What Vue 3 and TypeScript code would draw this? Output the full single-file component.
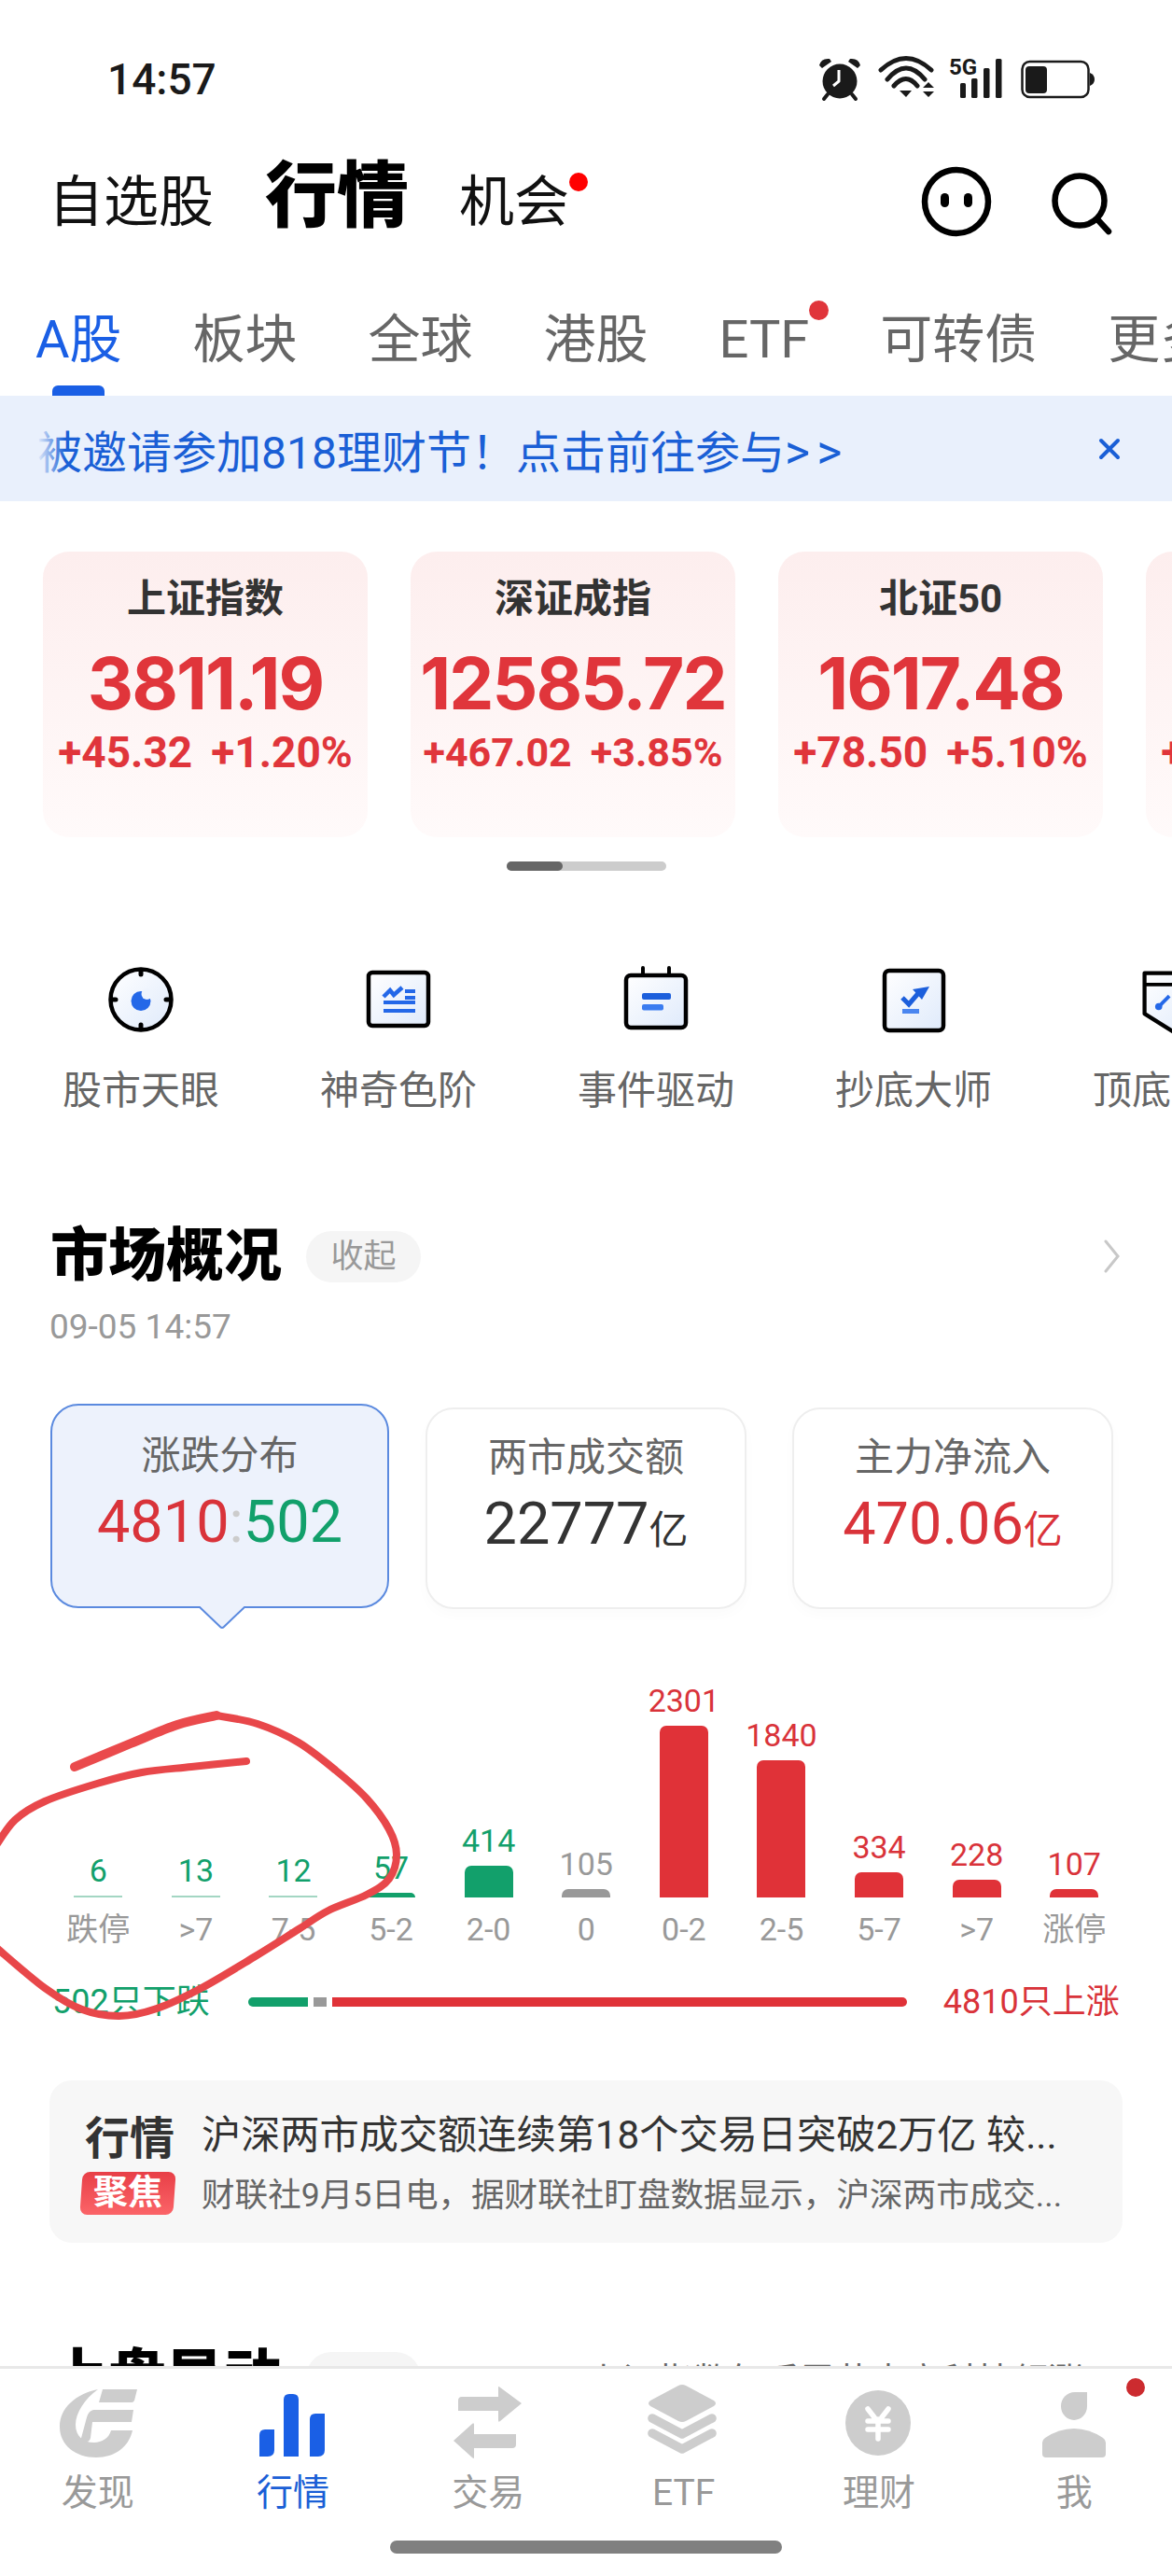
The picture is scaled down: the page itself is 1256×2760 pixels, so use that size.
<script setup lang="ts">
type Pt = [number, number]

function smooth(p: Pt[]): string {
  let d = `M${p[0][0]} ${p[0][1]}`
  for (let i = 0; i < p.length - 1; i++) {
    const a = p[Math.max(i - 1, 0)]
    const b = p[i]
    const c = p[i + 1]
    const e = p[Math.min(i + 2, p.length - 1)]
    d += ` C${b[0] + (c[0] - a[0]) / 6} ${b[1] + (c[1] - a[1]) / 6} ${c[0] - (e[0] - b[0]) / 6} ${c[1] - (e[1] - b[1]) / 6} ${c[0]} ${c[1]}`
  }
  return d
}

const inkLoop = smooth([
  [232, 1838], [276, 1847], [320, 1867], [360, 1897], [393, 1927], [417, 1960], [425, 1987], [417, 2013],
  [393, 2030], [352, 2047], [320, 2067], [272, 2097], [216, 2130], [168, 2152], [128, 2160], [88, 2153], [48, 2130], [-6, 2085],
])
const inkStart = smooth([[80, 1893], [140, 1868], [190, 1848], [232, 1838]])
const inkTail = smooth([[264, 1887], [205, 1893], [152, 1899], [104, 1911], [48, 1930], [16, 1950], [-6, 1980]])

const tabs = ['A股', '板块', '全球', '港股', 'ETF', '可转债', '更多']
const indices = [
  { name: '上证指数', value: '3811.19', change: '+45.32', pct: '+1.20%', small: false },
  { name: '深证成指', value: '12585.72', change: '+467.02', pct: '+3.85%', small: true },
  { name: '北证50', value: '1617.48', change: '+78.50', pct: '+5.10%', small: false },
  { name: '科创50', value: '1265.33', change: '+98.40', pct: '+8.43%', small: false },
]
const tools = ['股市天眼', '神奇色阶', '事件驱动', '抄底大师', '顶底雷达']
const dist = [
  { v: '6', l: '跌停', h: 2, c: 'faint' },
  { v: '13', l: '>7', h: 2, c: 'faint' },
  { v: '12', l: '7-5', h: 2, c: 'faint' },
  { v: '57', l: '5-2', h: 5, c: 'green' },
  { v: '414', l: '2-0', h: 34, c: 'green' },
  { v: '105', l: '0', h: 9, c: 'gray' },
  { v: '2301', l: '0-2', h: 184, c: 'red' },
  { v: '1840', l: '2-5', h: 147, c: 'red' },
  { v: '334', l: '5-7', h: 27, c: 'red' },
  { v: '228', l: '>7', h: 19, c: 'red' },
  { v: '107', l: '涨停', h: 9, c: 'red' },
]
const navLabels = ['发现', '行情', '交易', 'ETF', '理财', '我']
</script>

<template>
  <div class="page">
    <div class="scroll">
      <div class="status">
        <span class="time">14:57</span>
        <svg class="status-icons" viewBox="870 55 310 60" width="310" height="60">
          <circle cx="900" cy="87" r="18.5" fill="#1a1a1a" />
          <path d="M878 70 Q880 62 889 63 L891 66 L881 73 Z M922 70 Q920 62 911 63 L909 66 L919 73 Z" fill="#1a1a1a" />
          <path d="M887 101 L883 106 M913 101 L917 106" stroke="#1a1a1a" stroke-width="4" stroke-linecap="round" />
          <path d="M899 75 V87 L893 92" fill="none" stroke="#fff" stroke-width="3" stroke-linejoin="round" />
          <path d="M944 75 Q971 50 998 75 M951 85 Q971 61 991 85 M958 92 Q971 77 983 92" fill="none" stroke="#1a1a1a" stroke-width="5" stroke-linecap="round" />
          <path d="M964 97 H977 L971 104 Z M989 94 L995 88 L1001 94 Z M989 98 H1001 L995 104 Z" fill="#1a1a1a" />
          <text x="1017" y="80" class="five-g">5G</text>
          <rect x="1029" y="89" width="6" height="16" rx="1.5" fill="#1a1a1a" />
          <rect x="1041" y="84" width="6.5" height="21" rx="1.5" fill="#1a1a1a" />
          <rect x="1054" y="73" width="6.5" height="32" rx="1.5" fill="#1a1a1a" />
          <rect x="1067" y="63" width="6.5" height="42" rx="1.5" fill="#1a1a1a" />
          <rect x="1095.5" y="66" width="71" height="38" rx="8" fill="none" stroke="#1a1a1a" stroke-width="2.5" />
          <rect x="1099" y="71" width="23" height="29" rx="4" fill="#1a1a1a" />
          <path d="M1168 78 Q1173 80 1173 85 Q1173 90 1168 92 Z" fill="#1a1a1a" />
        </svg>
      </div>

      <header class="header">
        <div class="hd-nav">
          <span class="hd-item">自选股</span>
          <span class="hd-item hd-active">行情</span>
          <span class="hd-item hd-dot">机会</span>
        </div>
        <svg class="hd-icons" viewBox="985 175 210 85" width="210" height="85">
          <circle cx="1025" cy="218" r="34" fill="none" stroke="#000" stroke-width="6.5" />
          <rect x="1008" y="209" width="9" height="15" rx="4.5" fill="#000" />
          <rect x="1033" y="209" width="9" height="15" rx="4.5" fill="#000" />
          <circle cx="1157" cy="217" r="26.5" fill="none" stroke="#000" stroke-width="6.5" />
          <path d="M1176 237 L1188 250" stroke="#000" stroke-width="6.5" stroke-linecap="round" />
        </svg>
      </header>

      <nav class="tabs">
        <div v-for="(t, i) in tabs" :key="t" class="tab" :class="{ 'tab-on': i === 0 }">
          <span class="tab-text" :class="{ 'tab-dot': t === 'ETF' }">{{ t }}</span>
          <i v-if="i === 0" class="tab-line"></i>
        </div>
      </nav>

      <div class="banner">
        <span class="banner-text">被邀请参加818理财节！点击前往参与<span class="banner-more">&gt;&gt;</span></span>
        <svg class="banner-close" viewBox="0 0 30 30" width="30" height="30">
          <path d="M6 6 L24 24 M24 6 L6 24" stroke="#1a5fd6" stroke-width="4" stroke-linecap="round" />
        </svg>
      </div>

      <div class="cards">
        <div v-for="c in indices" :key="c.name" class="card">
          <div class="card-name">{{ c.name }}</div>
          <div class="card-value">{{ c.value }}</div>
          <div class="card-sub" :class="{ 'card-sub-sm': c.small }"><span>{{ c.change }}</span><span>{{ c.pct }}</span></div>
        </div>
      </div>
      <div class="indicator"><i></i></div>

      <div class="tools">
        <div v-for="(t, i) in tools" :key="t" class="tool">
          <svg v-if="i === 0" class="tool-icon" viewBox="0 0 72 72" width="72" height="72">
            <defs><linearGradient id="ga" x1="0" y1="0" x2="1" y2="1"><stop offset="0" stop-color="#fff" /><stop offset="1" stop-color="#dfeafb" /></linearGradient></defs>
            <circle cx="36" cy="36" r="32.5" fill="url(#ga)" stroke="#000" stroke-width="4.5" />
            <path d="M36 5 V9 M36 63 V67 M5 36 H9 M63 36 H67" stroke="#000" stroke-width="5" stroke-linecap="round" />
            <circle cx="36" cy="37.5" r="10.5" fill="#2468e8" />
            <circle cx="42.5" cy="30" r="6" fill="#eef4fd" />
          </svg>
          <svg v-else-if="i === 1" class="tool-icon" viewBox="0 0 72 72" width="72" height="72">
            <defs><linearGradient id="gb" x1="0" y1="0" x2="1" y2="1"><stop offset="0" stop-color="#fff" /><stop offset="1" stop-color="#dfeafb" /></linearGradient></defs>
            <rect x="4" y="7" width="64" height="57" rx="4" fill="url(#gb)" stroke="#000" stroke-width="4.5" />
            <path d="M20 33 L27 26 L31 31 L40 23" fill="none" stroke="#2468e8" stroke-width="4.5" />
            <path d="M43 27 H54 M43 34 H54 M20 39 H54 M20 48 H54" stroke="#2468e8" stroke-width="4" />
          </svg>
          <svg v-else-if="i === 2" class="tool-icon" viewBox="0 0 72 72" width="72" height="72">
            <defs><linearGradient id="gc" x1="0" y1="0" x2="1" y2="1"><stop offset="0" stop-color="#fff" /><stop offset="1" stop-color="#dfeafb" /></linearGradient></defs>
            <path d="M22 2 V10 M50 2 V10" stroke="#000" stroke-width="4" stroke-linecap="round" />
            <rect x="4" y="10" width="64" height="56" rx="5" fill="url(#gc)" stroke="#000" stroke-width="4.5" />
            <rect x="21" y="29" width="31" height="7" rx="2" fill="#1c5fdc" />
            <rect x="21" y="41" width="23" height="6.5" rx="2" fill="#3a7cf0" />
          </svg>
          <svg v-else-if="i === 3" class="tool-icon" viewBox="0 0 72 72" width="72" height="72">
            <defs><linearGradient id="gd" x1="0" y1="0" x2="1" y2="1"><stop offset="0" stop-color="#fff" /><stop offset="1" stop-color="#dfeafb" /></linearGradient></defs>
            <rect x="5" y="5" width="63" height="64" rx="5" fill="url(#gd)" stroke="#000" stroke-width="4.5" />
            <path d="M24 34 L31 41 L43 27" fill="none" stroke="#1c5fdc" stroke-width="5" />
            <path d="M35 25 L53 22 L45 36 Z" fill="#1c5fdc" />
            <rect x="24" y="46" width="18" height="5" fill="#4a86f0" />
          </svg>
          <svg v-else class="tool-icon" viewBox="0 0 72 76" width="72" height="76">
            <defs><linearGradient id="ge" x1="0" y1="0" x2="1" y2="1"><stop offset="0" stop-color="#fff" /><stop offset="1" stop-color="#dfeafb" /></linearGradient></defs>
            <path d="M6 8 H70 V74 H38 L6 54 Z" fill="url(#ge)" stroke="#000" stroke-width="4.5" stroke-linejoin="round" />
            <path d="M6 21 H70" stroke="#000" stroke-width="4" />
            <path d="M22 46 L34 34" stroke="#2468e8" stroke-width="4" />
            <circle cx="22" cy="46" r="4" fill="#2468e8" />
          </svg>
          <span class="tool-label">{{ t }}</span>
        </div>
      </div>

      <section class="sec-head">
        <h2 class="sec-title">市场概况</h2>
        <span class="chip">收起</span>
        <svg class="chev" viewBox="0 0 20 36" width="20" height="36">
          <path d="M3 2 L16 18 L3 34" fill="none" stroke="#c8c8c8" stroke-width="3" stroke-linecap="round" />
        </svg>
      </section>
      <div class="date">09-05 14:57</div>

      <div class="metrics">
        <div class="metric metric-on">
          <div class="metric-name">涨跌分布</div>
          <div class="metric-value"><span class="up">4810</span><span class="colon">:</span><span class="down">502</span></div>
          <svg class="metric-arrow" viewBox="0 0 52 26" width="52" height="26">
            <path d="M1 0 L24 22 Q26 24 28 22 L51 0" fill="#edf2fc" stroke="#5b8adf" stroke-width="2" />
          </svg>
        </div>
        <div class="metric">
          <div class="metric-name">两市成交额</div>
          <div class="metric-value dark">22777<small>亿</small></div>
        </div>
        <div class="metric">
          <div class="metric-name">主力净流入</div>
          <div class="metric-value up">470.06<small>亿</small></div>
        </div>
      </div>

      <div class="chart">
        <div v-for="(d, i) in dist" :key="i" class="col">
          <div class="plot">
            <span class="col-value" :class="'t-' + d.c">{{ d.v }}</span>
            <i class="bar" :class="'b-' + d.c" :style="{ height: d.h + 'px' }"></i>
          </div>
          <span class="axis">{{ d.l }}</span>
        </div>
      </div>

      <div class="breadth">
        <span class="down">502只下跌</span>
        <div class="breadth-bar"><i class="seg-g"></i><i class="seg-n"></i><i class="seg-r"></i></div>
        <span class="up">4810只上涨</span>
      </div>

      <div class="news">
        <div class="news-tag">
          <span class="news-kind">行情</span>
          <span class="news-badge"><b>聚焦</b></span>
        </div>
        <div class="news-body">
          <div class="news-title">沪深两市成交额连续第18个交易日突破2万亿 较...</div>
          <div class="news-sub">财联社9月5日电，据财联社盯盘数据显示，沪深两市成交...</div>
        </div>
      </div>

      <section class="sec-head next">
        <h2 class="sec-title">上盘异动</h2>
        <span class="chip next-chip">收起</span>
        <span class="next-text">上证指数午后震荡走高科技领涨</span>
      </section>
    </div>

    <footer class="nav">
      <div class="nav-row">
        <div v-for="(l, i) in navLabels" :key="l" class="nav-item" :class="{ 'nav-on': i === 1 }">
          <svg v-if="i === 0" viewBox="59 2555 90 80" width="90" height="80">
            <path d="M104 2560 C80 2565 63 2580 63 2600 C63 2620 80 2633 102 2633 C122 2633 137 2622 141 2604 L118 2604 C116 2612 108 2617 100 2617 C88 2617 80 2610 80 2598 C80 2585 90 2570 104 2560 Z" fill="#cdcdcd" />
            <path d="M109 2560 H146 L143 2572 Q142 2574 140 2574 H105 Z M99 2582 H142 L140 2595 H98 L96 2612 Q95 2616 92 2616 H85 L92 2590 Q94 2583 99 2582 Z" fill="#cdcdcd" />
          </svg>
          <svg v-else-if="i === 1" viewBox="269 2555 90 80" width="90" height="80">
            <path d="M278 2609 Q278 2603 284 2603 H294 V2625 Q294 2632 287 2632 H278 Z" fill="#1a5fe5" />
            <path d="M304 2571 Q304 2565 310 2565 H314 Q320 2565 320 2571 V2632 H304 Z" fill="#1a5fe5" />
            <path d="M332 2592 Q332 2586 338 2586 H348 V2625 Q348 2632 341 2632 H332 Z" fill="#1a5fe5" />
          </svg>
          <svg v-else-if="i === 2" viewBox="478 2555 90 80" width="90" height="80">
            <path d="M491 2572 Q491 2568 495 2568 H534 V2558 Q534 2556 536 2558 L559 2575 L536 2594 Q534 2596 534 2593 V2583 H491 Z" fill="#cdcdcd" />
            <path d="M553 2619 Q553 2623 549 2623 H508 V2633 Q508 2635 506 2633 L486 2615 L506 2597 Q508 2595 508 2598 V2608 H553 Z" fill="#cdcdcd" />
          </svg>
          <svg v-else-if="i === 3" viewBox="688 2555 90 80" width="90" height="80">
            <path d="M727 2556 Q731 2554 735 2556 L765 2572 Q769 2575 765 2578 L735 2594 Q731 2596 727 2594 L697 2578 Q693 2575 697 2572 Z" fill="#cdcdcd" />
            <path d="M699 2591 L731 2608 L763 2591" fill="none" stroke="#cdcdcd" stroke-width="9.5" stroke-linecap="round" stroke-linejoin="round" />
            <path d="M699 2607 L731 2624 L763 2607" fill="none" stroke="#cdcdcd" stroke-width="9.5" stroke-linecap="round" stroke-linejoin="round" />
          </svg>
          <svg v-else-if="i === 4" viewBox="897 2555 90 80" width="90" height="80">
            <circle cx="941" cy="2596" r="35" fill="#cdcdcd" />
            <path d="M930 2581 L937 2590 M952 2581 L945 2590 M930 2594 H952 M930 2603 H952 M941 2592 V2613" fill="none" stroke="#fff" stroke-width="5.5" stroke-linecap="round" />
          </svg>
          <svg v-else viewBox="1106 2555 90 80" width="90" height="80">
            <path d="M1165 2563 V2578 A14 15 0 0 1 1137 2578 C1137 2570 1143 2563 1152 2563 Z" fill="#cdcdcd" />
            <path d="M1117 2617 Q1117 2614 1120 2612 Q1135 2602 1151 2602 Q1167 2602 1182 2612 Q1185 2614 1185 2617 V2629 Q1185 2633 1181 2633 H1121 Q1117 2633 1117 2629 Z" fill="#cdcdcd" />
          </svg>
          <span class="nav-label">{{ l }}</span>
          <i v-if="i === 5" class="nav-dot"></i>
        </div>
      </div>
      <div class="home"></div>
    </footer>

    <svg class="ink" viewBox="0 0 1256 2760" width="1256" height="2760">
      <path :d="inkLoop" fill="none" stroke="#e8474a" stroke-width="8" stroke-linecap="round" />
      <path :d="inkStart" fill="none" stroke="#ea4a4c" stroke-width="10" stroke-linecap="round" />
      <path :d="inkTail" fill="none" stroke="#e8474a" stroke-width="8" stroke-linecap="round" />
    </svg>
  </div>
</template>

<style scoped>
.page {
  position: relative;
  width: 1256px;
  height: 2760px;
  display: flex;
  flex-direction: column;
  overflow: hidden;
  background: #fff;
  font-family: Roboto, "Noto Sans CJK SC", sans-serif;
}
.scroll { flex: 1; min-height: 0; overflow: hidden; }
.up { color: #d9333a; }
.down { color: #12a06b; }
.dark { color: #333; }

.status { height: 60px; margin-top: 55px; padding: 0 76px 0 115px; display: flex; justify-content: space-between; align-items: center; }
.time { font-size: 46px; font-weight: 500; color: #1a1a1a; }
.five-g { font: 700 24px Roboto, sans-serif; fill: #1a1a1a; }

.header { height: 200px; margin-bottom: 7px; padding: 0 61px 0 52px; display: flex; justify-content: space-between; align-items: center; }
.hd-nav { display: flex; align-items: baseline; padding-bottom: 23px; }
.hd-item { font-size: 59px; color: #111; position: relative; }
.hd-active { font-size: 77px; font-weight: 900; color: #000; margin: 0 54px 0 55px; }
.hd-dot::after { content: ""; position: absolute; right: -20px; top: 16px; width: 20px; height: 20px; border-radius: 50%; background: #f00; }

.tabs { display: flex; gap: 76px; padding-left: 38px; height: 102px; white-space: nowrap; overflow: hidden; }
.tab { display: flex; flex-direction: column; align-items: center; flex: none; }
.tab-text { font-size: 56px; line-height: 84px; color: #666; position: relative; }
.tab-on .tab-text { color: #1a5fe5; }
.tab-dot::after { content: ""; position: absolute; right: -21px; top: 0; width: 21px; height: 21px; border-radius: 50%; background: #e0353b; }
.tab-line { display: block; width: 56px; height: 11px; margin-top: 7px; border-radius: 6px 6px 0 0; background: #1a5fe5; }

.banner { position: relative; height: 113px; padding: 0 52px 0 40px; background: #e9f0fc; display: flex; justify-content: space-between; align-items: center; }
.banner::before { content: ""; position: absolute; left: 36px; top: 20px; width: 34px; height: 70px; background: linear-gradient(90deg, #e9f0fc 10%, rgba(233, 240, 252, 0)); }
.banner-text { font-size: 48px; color: #1a5fd6; white-space: nowrap; }
.banner-more { letter-spacing: 7px; font-size: 52px; }

.cards { display: flex; gap: 46px; margin-top: 54px; padding-left: 46px; overflow: hidden; }
.card { flex: none; width: 348px; height: 306px; padding-top: 25px; box-sizing: border-box; border-radius: 28px; background: linear-gradient(180deg, #fdeeee, #fffafa); text-align: center; white-space: nowrap; }
.card-name { font-size: 42px; font-weight: 700; line-height: 52px; color: #333; }
.card-value { margin-top: 16px; font-family: Inter, Roboto, sans-serif; font-size: 76.5px; font-weight: 700; line-height: 96px; letter-spacing: -2px; color: #e0353b; }
.card-sub { display: flex; justify-content: center; gap: 20px; font-size: 46px; font-weight: 700; line-height: 52px; color: #e0353b; }
.card-sub-sm { font-size: 43px; }

.indicator { width: 171px; height: 10px; margin: 26px auto 0; border-radius: 5px; background: #ccc; }
.indicator i { display: block; width: 60px; height: 10px; border-radius: 5px; background: #666; }

.tools { display: flex; margin-top: 102px; padding-left: 13px; overflow: hidden; }
.tool { flex: none; width: 276px; display: flex; flex-direction: column; align-items: center; }
.tool-icon { height: 72px; }
.tool-label { margin-top: 36px; font-size: 42px; line-height: 52px; color: #666; white-space: nowrap; }

.sec-head { display: flex; align-items: center; margin-top: 111px; padding: 0 54px 0 54px; height: 80px; }
.sec-title { margin: 0; font-size: 62px; font-weight: 900; line-height: 80px; color: #000; }
.chip { margin-left: 26px; width: 123px; height: 55px; border-radius: 28px; background: #f5f5f5; color: #999; font-size: 35px; line-height: 55px; text-align: center; }
.chev { margin-left: auto; }
.date { margin-top: 14px; padding-left: 53px; font-size: 37px; line-height: 44px; color: #999; }

.metrics { display: flex; align-items: flex-start; margin-top: 60px; padding-left: 54px; }
.metric { position: relative; box-sizing: border-box; width: 344px; height: 216px; margin-top: 4px; padding-top: 26px; border: 2px solid #eee; border-radius: 30px; text-align: center; white-space: nowrap; box-shadow: 0 6px 14px rgba(0, 0, 0, 0.02); }
.metric:nth-child(2) { margin-left: 39px; }
.metric:nth-child(3) { margin-left: 49px; }
.metric-on { width: 363px; height: 219px; margin-top: 0; padding-top: 28px; background: #edf2fc; border-color: #5b8adf; box-shadow: none; }
.metric-name { font-size: 42px; line-height: 52px; color: #666; }
.metric-value { margin-top: 8px; font-size: 63px; line-height: 74px; }
.metric-value small { font-size: 42px; }
.colon { color: #ccc; }
.metric-arrow { position: absolute; left: 156px; top: 215px; }

.chart { display: flex; margin-top: 66px; padding-left: 53px; }
.col { flex: none; width: 104.6px; display: flex; flex-direction: column; align-items: center; }
.plot { height: 243px; display: flex; flex-direction: column; justify-content: flex-end; align-items: center; }
.col-value { font-size: 34px; line-height: 44px; margin-bottom: 5px; }
.bar { display: block; width: 52px; border-radius: 7px 7px 0 0; }
.t-faint, .t-green { color: #12a06b; }
.t-gray { color: #999; }
.t-red { color: #d9333a; }
.b-faint { background: #a3d6c3; border-radius: 0; }
.b-green { background: #12a06b; }
.b-gray { background: #999; }
.b-red { background: #e03238; }
.axis { margin-top: 12px; font-size: 34px; line-height: 44px; color: #999; white-space: nowrap; }

.breadth { display: flex; align-items: center; margin-top: 32px; padding-left: 56px; font-size: 36px; line-height: 48px; white-space: nowrap; }
.breadth-bar { flex: none; display: flex; width: 706px; height: 10px; margin: 0 39px 0 41px; }
.breadth-bar i { display: block; height: 10px; }
.seg-g { width: 64px; background: #12a06b; border-radius: 5px 0 0 5px; }
.seg-n { width: 14px; margin: 0 6px; background: #999; }
.seg-r { flex: 1; background: #e03238; border-radius: 0 5px 5px 0; }

.news { display: flex; box-sizing: border-box; width: 1150px; height: 174px; margin: 60px 0 0 53px; padding: 34px 0 0 34px; border-radius: 24px; background: #f7f7f7; white-space: nowrap; }
.news-tag { flex: none; width: 129px; display: flex; flex-direction: column; }
.news-kind { font-size: 48px; font-weight: 700; line-height: 58px; color: #333; padding-left: 4px; }
.news-badge { display: block; width: 100px; height: 46px; margin-top: 6px; border-radius: 8px; background: linear-gradient(180deg, #e83f47, #fb6468); color: #fff; text-align: center; transform: skewX(-4deg); }
.news-badge b { font-size: 37px; line-height: 46px; font-weight: 700; display: block; transform: skewX(4deg); }
.news-title { font-size: 42.2px; line-height: 50px; color: #333; }
.news-sub { margin-top: 14px; font-size: 35.6px; line-height: 50px; color: #666; }

.next { margin-top: 104px; }
.next-chip { color: transparent; }
.next-text { margin-left: auto; margin-right: 41px; font-size: 38px; color: #666; white-space: nowrap; }

.nav { flex: none; box-sizing: border-box; height: 225px; padding-top: 17px; border-top: 3px solid #e8e8e8; background: #fff; }
.nav-row { display: flex; }
.nav-item { position: relative; flex: 1; display: flex; flex-direction: column; align-items: center; }
.nav-item svg { display: block; height: 80px; }
.nav-label { margin-top: 14px; font-size: 39px; line-height: 44px; color: #999; }
.nav-on .nav-label { color: #1a5fd6; }
.nav-dot { position: absolute; left: 160px; top: -7px; width: 20px; height: 20px; border-radius: 50%; background: #cc2b2f; }
.home { width: 420px; height: 14px; margin: 29px auto 0; border-radius: 7px; background: #808080; }

.ink { position: absolute; left: 0; top: 0; pointer-events: none; }
</style>
